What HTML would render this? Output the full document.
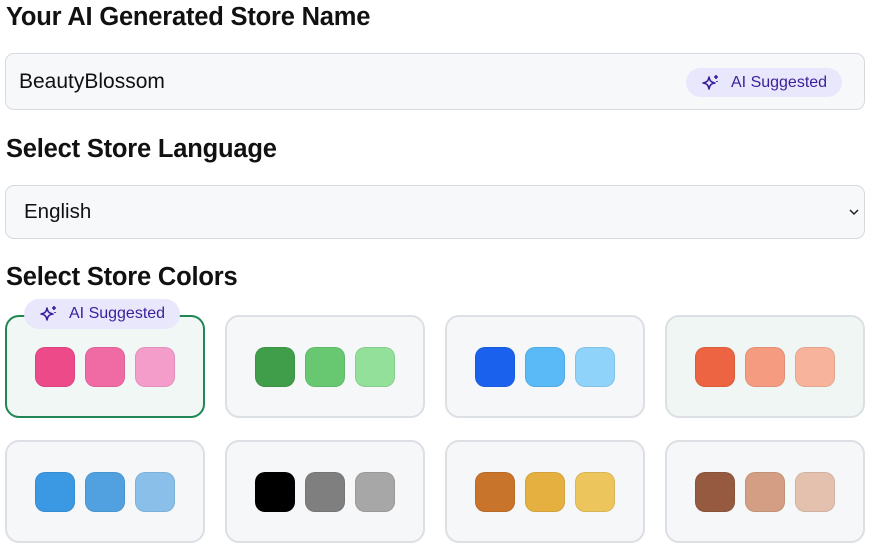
<!DOCTYPE html>
<html><head><style>
*{box-sizing:border-box;margin:0;padding:0}
body{width:874px;height:548px;background:#fff;font-family:"Liberation Sans",sans-serif;color:#111;position:relative;overflow:hidden}
h2{position:absolute;left:6px;font-size:25.5px;font-weight:700;letter-spacing:-0.2px;line-height:30px}
.inp{position:absolute;left:5px;width:860px;background:#f7f8fa;border:1.5px solid #d6d9de;border-radius:9px;font-size:20.5px;padding-left:13px;display:flex;align-items:center}
.badge{position:absolute;height:29px;border-radius:15px;background:#e9e7fb;color:#3a1f9c;font-size:16px;display:flex;align-items:center;padding:0 14px 0 15px;gap:10px}
.card{position:absolute;width:200px;height:103px;background:#f6f7f9;border:2px solid #dcdfe4;border-radius:14px}
.sw{position:absolute;top:30px;width:40px;height:40px;border-radius:10px;border:1px solid rgba(0,0,0,0.08)}
</style></head><body>
<h2 style="top:2px">Your AI Generated Store Name</h2>
<div class="inp" style="top:53px;height:57px;font-size:21px">BeautyBlossom</div>
<div class="badge" style="left:686px;top:68px;width:156px"><svg width="20" height="20" viewBox="0 0 20 20" fill="none" stroke="#3a1f9c" stroke-width="1.6" stroke-linejoin="round"><path d="M8 4 C8.8 8 10 9.3 14 10 C10 10.7 8.8 12 8 16 C7.2 12 6 10.7 2 10 C6 9.3 7.2 8 8 4Z"/><path d="M15 2v4M13 4h4M16 8v1"/></svg>AI Suggested</div>
<h2 style="top:134px">Select Store Language</h2>
<div class="inp" style="top:185px;height:54px;padding-left:18px">English
<svg style="position:absolute;right:4px;top:21px" width="12" height="10" viewBox="0 0 12 10"><path d="M2 3l4 4 4-4" fill="none" stroke="#222" stroke-width="1.5"/></svg></div>
<h2 style="top:262px">Select Store Colors</h2>

<div class="card" style="left:5px;top:315px;background:#f0f7f4;border-color:#1f8654"><div class="sw" style="left:28px;background:#ec4a89"></div><div class="sw" style="left:78px;background:#f06ba4"></div><div class="sw" style="left:128px;background:#f59dca"></div></div>
<div class="badge" style="left:24px;top:299px;width:156px;height:30px"><svg width="20" height="20" viewBox="0 0 20 20" fill="none" stroke="#3a1f9c" stroke-width="1.6" stroke-linejoin="round"><path d="M8 4 C8.8 8 10 9.3 14 10 C10 10.7 8.8 12 8 16 C7.2 12 6 10.7 2 10 C6 9.3 7.2 8 8 4Z"/><path d="M15 2v4M13 4h4M16 8v1"/></svg>AI Suggested</div>
<div class="card" style="left:225px;top:315px"><div class="sw" style="left:28px;background:#409e4a"></div><div class="sw" style="left:78px;background:#68c872"></div><div class="sw" style="left:128px;background:#93e09a"></div></div>
<div class="card" style="left:445px;top:315px"><div class="sw" style="left:28px;background:#1a62ee"></div><div class="sw" style="left:78px;background:#5ab9f7"></div><div class="sw" style="left:128px;background:#8fd3fb"></div></div>
<div class="card" style="left:665px;top:315px;background:#f0f6f3"><div class="sw" style="left:28px;background:#ec6441"></div><div class="sw" style="left:78px;background:#f59c80"></div><div class="sw" style="left:128px;background:#f8b39c"></div></div>

<div class="card" style="left:5px;top:440px"><div class="sw" style="left:28px;background:#3b98e3"></div><div class="sw" style="left:78px;background:#51a1e0"></div><div class="sw" style="left:128px;background:#89bfe9"></div></div>
<div class="card" style="left:225px;top:440px"><div class="sw" style="left:28px;background:#000"></div><div class="sw" style="left:78px;background:#7f7f7f"></div><div class="sw" style="left:128px;background:#a7a7a7"></div></div>
<div class="card" style="left:445px;top:440px"><div class="sw" style="left:28px;background:#c8742a"></div><div class="sw" style="left:78px;background:#e5b040"></div><div class="sw" style="left:128px;background:#ecc65d"></div></div>
<div class="card" style="left:665px;top:440px"><div class="sw" style="left:28px;background:#955a40"></div><div class="sw" style="left:78px;background:#d39e84"></div><div class="sw" style="left:128px;background:#e3c1ae"></div></div>
</body></html>
